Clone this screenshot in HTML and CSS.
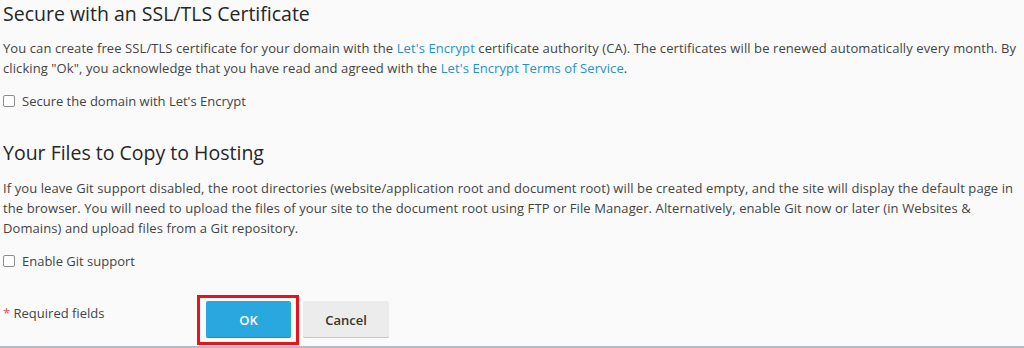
FILE: index.html
```html
<!DOCTYPE html>
<html>
<head>
<meta charset="utf-8">
<link rel="stylesheet" href="styles.css">
</head>
<body>
<div class="page">
  <section class="section">
    <h2 class="heading">Secure with an SSL/TLS Certificate</h2>
    <p class="text">You can create free SSL/TLS certificate for your domain with the <a class="link" href="#">Let's Encrypt</a> certificate authority (CA). The certificates will be renewed automatically every month. By clicking "Ok", you acknowledge that you have read and agreed with the <a class="link" href="#">Let's Encrypt Terms of Service</a>.</p>
    <label class="check"><span class="box"></span><span>Secure the domain with Let's Encrypt</span></label>
  </section>
  <section class="section second">
    <h2 class="heading">Your Files to Copy to Hosting</h2>
    <p class="text">If you leave Git support disabled, the root directories (website/application root and document root) will be created empty, and the site will display the default page in the browser. You will need to upload the files of your site to the document root using FTP or File Manager. Alternatively, enable Git now or later (in Websites &amp; Domains) and upload files from a Git repository.</p>
    <label class="check"><span class="box"></span><span>Enable Git support</span></label>
  </section>
  <div class="footer">
    <div class="required"><span class="star">*</span> Required fields</div>
    <div class="buttons">
      <div class="highlight"><button class="btn primary">OK</button></div>
      <button class="btn cancel">Cancel</button>
    </div>
  </div>
</div>
</body>
</html>
```
FILE: styles.css
```css
html, body {
  margin: 0;
  padding: 0;
  background: #fafafa;
}
body {
  width: 1024px;
  height: 348px;
  overflow: hidden;
  font-family: "Open Sans", "Noto Sans", sans-serif;
  color: #444;
  font-size: 13px;
}
.page {
  height: 346px;
  border-bottom: 2px solid #b2bacb;
  padding-left: 3px;
}
.heading {
  margin: 0;
  font-size: 19.5px;
  font-weight: 400;
  line-height: 27px;
  color: #262626;
}
.text {
  margin: 11px 0 0;
  line-height: 20px;
  width: 1016px;
  letter-spacing: 0.09px;
}
.second .text {
  margin-top: 12px;
}
.link {
  color: #2891c5;
  text-decoration: none;
}
.check {
  display: flex;
  align-items: center;
  gap: 7px;
  margin-top: 13px;
  line-height: 20px;
}
.box {
  width: 10px;
  height: 10px;
  border: 1px solid #8c8c8c;
  border-radius: 2px;
  background: #fff;
}
.second {
  margin-top: 28px;
}
.footer {
  display: flex;
  align-items: flex-start;
  margin-top: 24px;
}
.required {
  width: 194px;
  line-height: 20px;
  padding-top: 8px;
}
.star {
  color: #e0505e;
}
.buttons {
  display: flex;
  align-items: flex-start;
  gap: 4px;
}
.highlight {
  border: 3px solid #e5141d;
  padding: 3px 5px 4px 6px;
}
.btn {
  font-family: "Open Sans", "Noto Sans", sans-serif;
  font-size: 13px;
  font-weight: 600;
  height: 37px;
  border: 0;
  border-radius: 2px;
  margin: 0;
  padding: 0;
}
.primary {
  width: 85px;
  background: #28a8de;
  color: #fff;
  box-shadow: inset 0 -1px 0 rgba(0,0,0,0.15);
}
.cancel {
  width: 86px;
  margin-top: 6px;
  background: #ececec;
  color: #333;
  box-shadow: inset 0 -1px 0 #c6c6c6;
}
```
